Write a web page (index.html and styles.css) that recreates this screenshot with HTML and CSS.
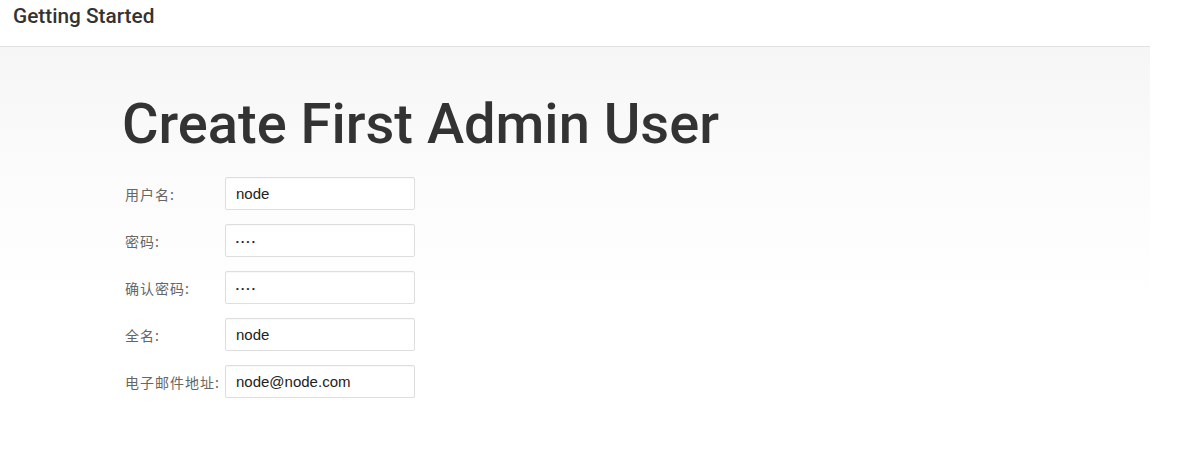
FILE: index.html
```html
<!DOCTYPE html>
<html>
<head>
<meta charset="utf-8">
<link rel="stylesheet" href="styles.css">
</head>
<body>
<header class="top">
  <div class="top-title">Getting Started</div>
</header>
<main class="panel">
  <h1 class="title">Create First Admin User</h1>
  <form class="form">
    <div class="row"><label class="label">用户名:</label><input class="field" type="text" value="node"></div>
    <div class="row"><label class="label">密码:</label><input class="field pw" type="text" value="••••"></div>
    <div class="row"><label class="label">确认密码:</label><input class="field pw" type="text" value="••••"></div>
    <div class="row"><label class="label">全名:</label><input class="field" type="text" value="node"></div>
    <div class="row"><label class="label">电子邮件地址:</label><input class="field" type="text" value="node@node.com"></div>
  </form>
</main>
</body>
</html>
```
FILE: styles.css
```css
html, body {
  margin: 0;
  padding: 0;
  background: #fff;
  font-family: Roboto, "Noto Sans CJK SC", sans-serif;
}
body {
  min-height: 458px;
}
.top {
  height: 46px;
  width: 1150px;
  border-bottom: 1px solid #e2e2e2;
  box-shadow: 0 1px 1px rgba(0,0,0,0.03);
  display: flex;
  align-items: flex-start;
}
.top-title {
  margin: 4px 0 0 13px;
  font-size: 20.8px;
  font-weight: 500;
  color: #333;
  line-height: 24px;
}
.panel {
  width: 1150px;
  background: linear-gradient(to bottom, #f6f6f6 0px, #fbfbfb 120px, #ffffff 260px);
  padding: 42px 0 60px 122px;
  box-sizing: border-box;
}
.title {
  margin: 0;
  font-size: 56px;
  font-weight: 500;
  color: #333;
  line-height: 70px;
}
.form {
  margin-top: 18px;
  display: flex;
  flex-direction: column;
  gap: 14px;
  padding-left: 3px;
}
.row {
  display: flex;
  align-items: center;
  height: 33px;
}
.label {
  width: 100px;
  font-size: 14px;
  letter-spacing: 1px;
  color: #666;
  font-family: "Noto Sans CJK SC", sans-serif;
}
.field {
  width: 190px;
  height: 33px;
  box-sizing: border-box;
  border: 1px solid #dedede;
  border-radius: 2px;
  box-shadow: inset 0 1px 1px rgba(0,0,0,0.03);
  background: #fff;
  padding: 0 10px;
  font-family: "Liberation Sans", Arial, sans-serif;
  font-size: 15px;
  color: #222;
  outline: none;
}
.pw {
  font-size: 8px;
  letter-spacing: 2.5px;
  padding-top: 2px;
}
```
